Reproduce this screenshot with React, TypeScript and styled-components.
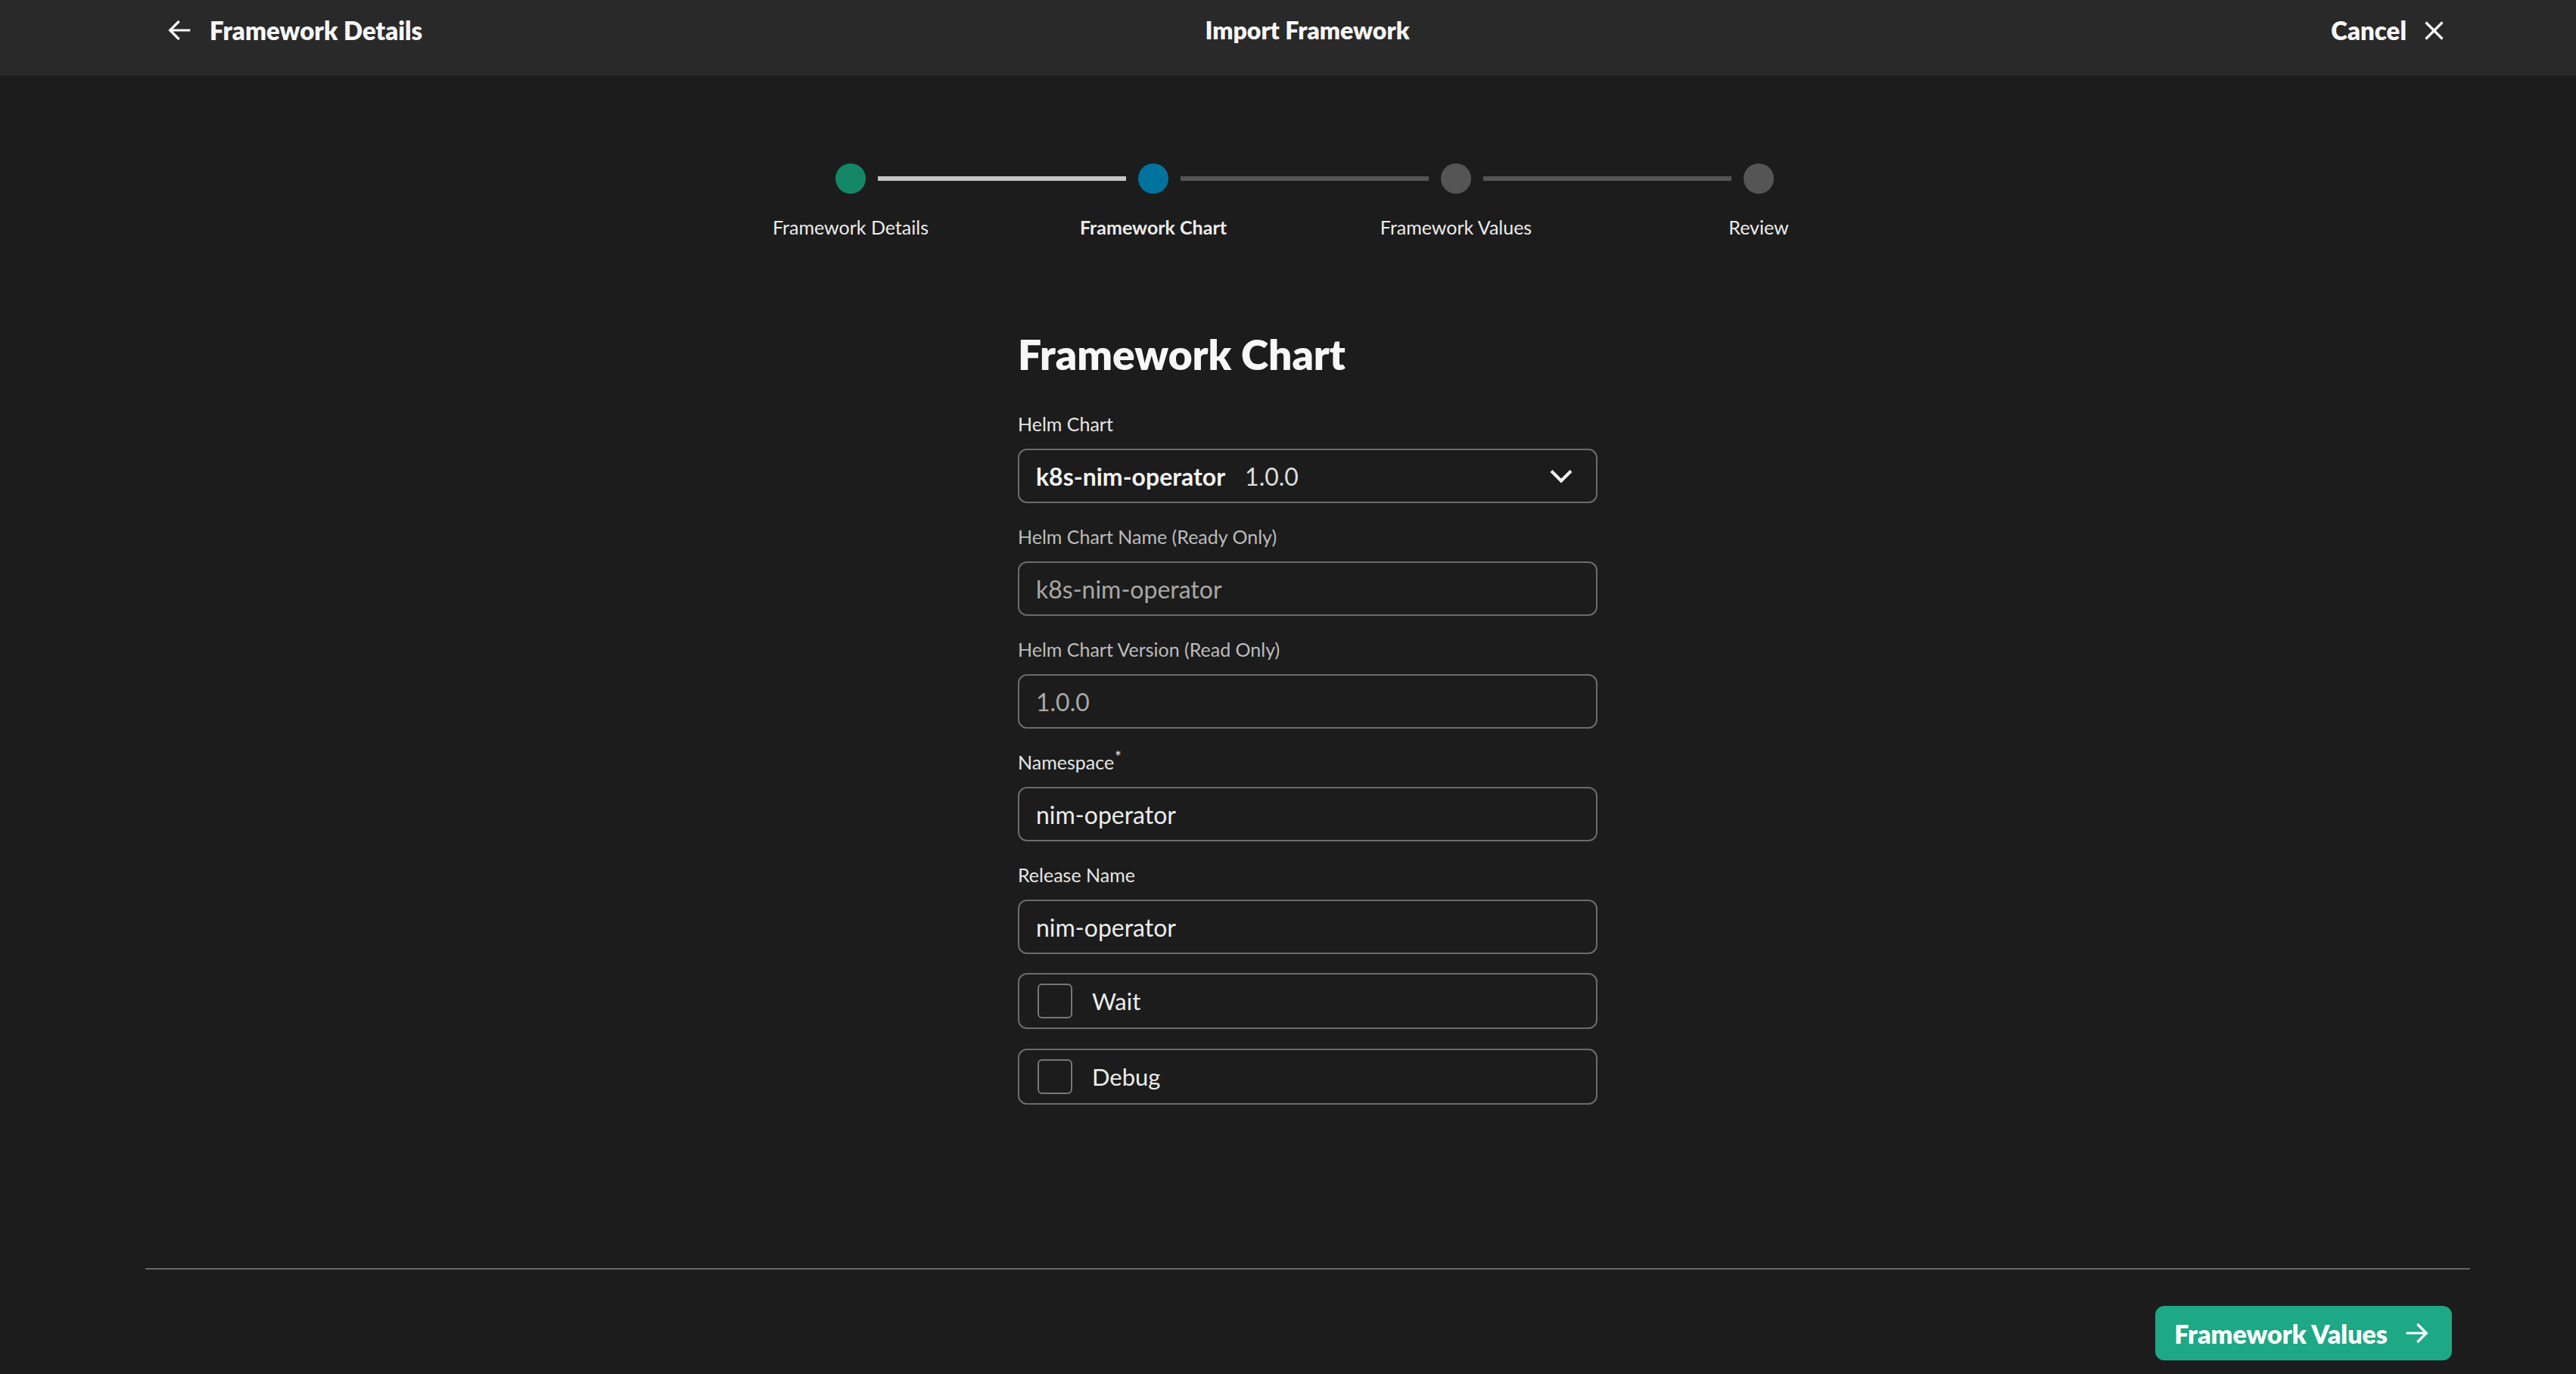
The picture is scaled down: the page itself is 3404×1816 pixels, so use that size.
import React from 'react'
import styled, { createGlobalStyle } from 'styled-components'

const GlobalStyle = createGlobalStyle`
  html, body {
    margin: 0;
    padding: 0;
    background: #1c1c1c;
  }
  body {
    font-family: Lato, "Noto Sans", "Liberation Sans", sans-serif;
    color: #f2f2f2;
    overflow: hidden;
  }
  * {
    box-sizing: border-box;
  }
`

const Page = styled.div`
  display: flex;
  flex-direction: column;
  min-height: 100vh;
`

// Header bar
const Header = styled.header`
  display: grid;
  grid-template-columns: 1fr auto 1fr;
  align-items: center;
  height: 100px;
  padding: 0 171px 20px 222px;
  background: #292929;
`

const HeaderButton = styled.button<{ $align: 'start' | 'end' }>`
  justify-self: ${(p) => p.$align};
  display: flex;
  align-items: center;
  gap: ${(p) => (p.$align === 'start' ? '23px' : '20px')};
  padding: 0;
  background: none;
  border: none;
  color: #f7f7f7;
  font-family: inherit;
  font-size: 33px;
  font-weight: 800;
  line-height: 40px;
  cursor: pointer;
`

const HeaderTitle = styled.h1`
  margin: 0;
  font-size: 32px;
  font-weight: 800;
  line-height: 40px;
  color: #f7f7f7;
`

const Main = styled.main`
  flex: 1;
  display: flex;
  flex-direction: column;
  align-items: center;
  padding-left: 52px;
`

// Stepper
type StepState = 'done' | 'active' | 'todo'

const Stepper = styled.ol`
  display: flex;
  margin: 116px 8px 0 0;
  padding: 0;
  list-style: none;
`

const Step = styled.li`
  width: 400px;
  display: flex;
  flex-direction: column;
  align-items: center;
`

const Track = styled.div`
  display: flex;
  align-items: center;
  gap: 16px;
  width: 100%;
`

const Segment = styled.span<{ $tone: 'none' | 'done' | 'todo' }>`
  flex: 1;
  height: 6px;
  background: ${(p) =>
    p.$tone === 'none' ? 'transparent' : p.$tone === 'done' ? '#c6c6c6' : '#555555'};
`

const Dot = styled.span<{ $state: StepState }>`
  flex: none;
  width: 40px;
  height: 40px;
  border-radius: 50%;
  background: ${(p) =>
    p.$state === 'done' ? '#138768' : p.$state === 'active' ? '#00739d' : '#555555'};
`

const StepLabel = styled.span<{ $active: boolean }>`
  margin-top: 28px;
  font-size: 25px;
  line-height: 32px;
  font-weight: ${(p) => (p.$active ? 700 : 400)};
  color: #ececec;
`

// Form
const Form = styled.form`
  width: 766px;
  display: flex;
  flex-direction: column;
  margin-top: 120px;
`

const Title = styled.h2`
  margin: 0 0 43px;
  font-size: 55px;
  line-height: 65px;
  font-weight: 800;
  color: #f7f7f7;
`

const Field = styled.div`
  display: flex;
  flex-direction: column;
  gap: 17px;
  margin-bottom: 28px;
`

const Label = styled.label<{ $dim?: boolean }>`
  font-size: 25px;
  line-height: 32px;
  color: ${(p) => (p.$dim ? '#bcbcbc' : '#e6e6e6')};
  sup {
    font-size: 21px;
    line-height: 0;
    margin-left: 1px;
  }
`

const TextInput = styled.input<{ $dim?: boolean }>`
  height: 72px;
  width: 100%;
  padding: 0 22px;
  background: transparent;
  border: 2px solid #6b6b6b;
  border-radius: 12px;
  outline: none;
  font-family: inherit;
  font-size: 32px;
  color: ${(p) => (p.$dim ? '#a8a8a8' : '#ececec')};
`

const Select = styled.div`
  height: 72px;
  display: flex;
  align-items: center;
  padding: 0 20px 0 22px;
  border: 2px solid #6b6b6b;
  border-radius: 12px;
  font-size: 32px;
  cursor: pointer;
`

const SelectName = styled.span`
  font-weight: 700;
  color: #f4f4f4;
`

const SelectVersion = styled.span`
  flex: 1;
  margin-left: 26px;
  color: #dcdcdc;
`

const CheckRow = styled.label`
  height: 74px;
  display: flex;
  align-items: center;
  gap: 26px;
  padding: 0 24px;
  margin-top: -3px;
  margin-bottom: 29px;
  border: 2px solid #6b6b6b;
  border-radius: 12px;
  font-size: 31px;
  color: #ececec;
  cursor: pointer;
`

const CheckBox = styled.input`
  appearance: none;
  margin: 0;
  width: 46px;
  height: 46px;
  border: 2px solid #777777;
  border-radius: 6px;
  background: transparent;
`

// Footer
const Footer = styled.footer`
  display: flex;
  flex-direction: column;
  align-items: flex-end;
  padding: 0 140px 18px 192px;
`

const Divider = styled.hr`
  align-self: stretch;
  height: 2px;
  margin: 0 0 48px;
  border: none;
  background: #666666;
`

const NextButton = styled.button`
  height: 72px;
  display: flex;
  align-items: center;
  gap: 22px;
  margin-right: 24px;
  padding: 0 31px 0 25px;
  background: #1da886;
  border: none;
  border-radius: 12px;
  color: #ffffff;
  font-family: inherit;
  font-size: 34px;
  font-weight: 800;
  cursor: pointer;
`

const Icon = ({ d, size }: { d: string; size: number }) => (
  <svg width={size} height={size} viewBox="0 0 24 24" fill="none" stroke="currentColor" strokeWidth={2.4}>
    <path d={d} />
  </svg>
)

const steps: { label: string; state: StepState }[] = [
  { label: 'Framework Details', state: 'done' },
  { label: 'Framework Chart', state: 'active' },
  { label: 'Framework Values', state: 'todo' },
  { label: 'Review', state: 'todo' },
]

export default function App() {
  return (
    <Page>
      <GlobalStyle />
      <Header>
        <HeaderButton $align="start">
          <Icon size={32} d="M22 12H3M11 3l-9 9 9 9" />
          Framework Details
        </HeaderButton>
        <HeaderTitle>Import Framework</HeaderTitle>
        <HeaderButton $align="end">
          Cancel
          <Icon size={33} d="M4 4l16 16M4 20L20 4" />
        </HeaderButton>
      </Header>

      <Main>
        <Stepper>
          {steps.map((step, i) => (
            <Step key={step.label}>
              <Track>
                <Segment $tone={i === 0 ? 'none' : steps[i - 1].state === 'done' ? 'done' : 'todo'} />
                <Dot $state={step.state} />
                <Segment $tone={i === steps.length - 1 ? 'none' : step.state === 'done' ? 'done' : 'todo'} />
              </Track>
              <StepLabel $active={step.state === 'active'}>{step.label}</StepLabel>
            </Step>
          ))}
        </Stepper>

        <Form onSubmit={(e) => e.preventDefault()}>
          <Title>Framework Chart</Title>

          <Field>
            <Label>Helm Chart</Label>
            <Select role="combobox">
              <SelectName>k8s-nim-operator</SelectName>
              <SelectVersion>1.0.0</SelectVersion>
              <svg width={52} height={52} viewBox="0 0 24 24" fill="none" stroke="#f2f2f2" strokeWidth={1.9}>
                <path d="M18 9l-6 6-6-6" />
              </svg>
            </Select>
          </Field>

          <Field>
            <Label $dim>Helm Chart Name (Ready Only)</Label>
            <TextInput $dim readOnly value="k8s-nim-operator" />
          </Field>

          <Field>
            <Label $dim>Helm Chart Version (Read Only)</Label>
            <TextInput $dim readOnly value="1.0.0" />
          </Field>

          <Field>
            <Label>
              Namespace<sup>*</sup>
            </Label>
            <TextInput defaultValue="nim-operator" />
          </Field>

          <Field>
            <Label>Release Name</Label>
            <TextInput defaultValue="nim-operator" />
          </Field>

          <CheckRow>
            <CheckBox type="checkbox" />
            Wait
          </CheckRow>
          <CheckRow>
            <CheckBox type="checkbox" />
            Debug
          </CheckRow>
        </Form>
      </Main>

      <Footer>
        <Divider />
        <NextButton>
          Framework Values
          <Icon size={32} d="M2 12h19M13 3l9 9-9 9" />
        </NextButton>
      </Footer>
    </Page>
  )
}
